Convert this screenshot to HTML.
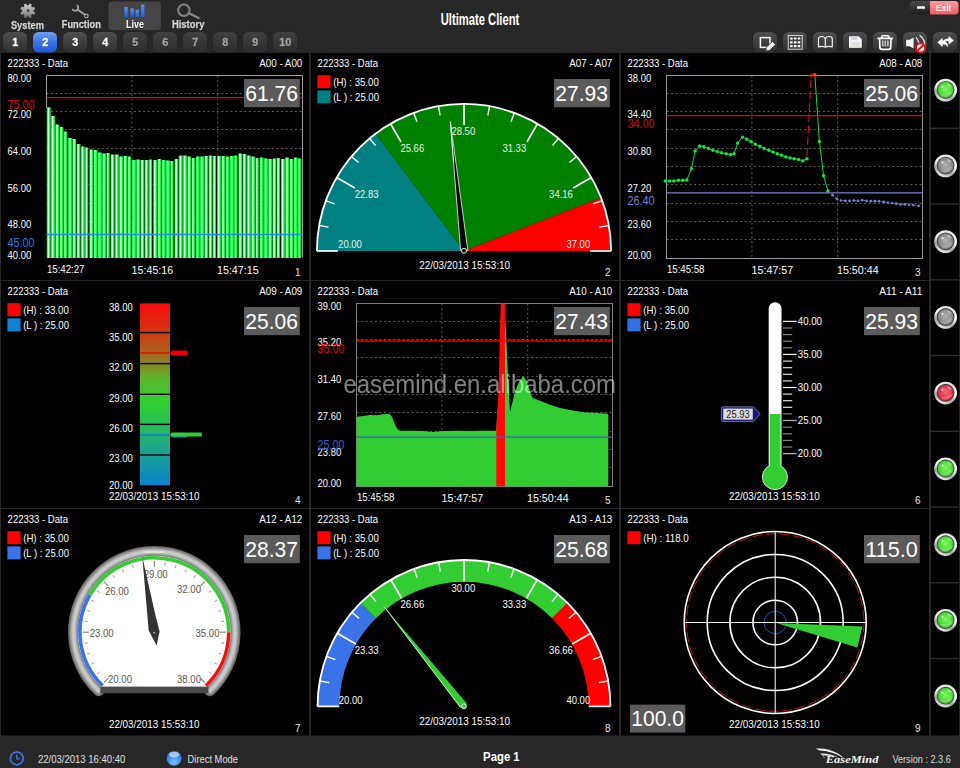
<!DOCTYPE html>
<html lang="en">
<head>
<meta charset="utf-8">
<title>Ultimate Client</title>
<style>
html, body { margin: 0; padding: 0; background: #272727; overflow: hidden; }
body { width: 960px; height: 768px; font-family: 'Liberation Sans', 'DejaVu Sans', sans-serif; }
svg { display: block; position: absolute; left: 0; top: 0; }
svg text { font-family: "Liberation Sans", "DejaVu Sans", sans-serif; }
</style>
</head>
<body>
<svg width="960" height="768" viewBox="0 0 960 768">
<defs>
<linearGradient id="gb" x1="0" y1="0" x2="0" y2="1"><stop offset="0" stop-color="#4e4e4e"/><stop offset="1" stop-color="#2f2f2f"/></linearGradient>
<linearGradient id="gbd" x1="0" y1="0" x2="0" y2="1"><stop offset="0" stop-color="#404040"/><stop offset="1" stop-color="#2c2c2c"/></linearGradient>
<linearGradient id="gba" x1="0" y1="0" x2="0" y2="1"><stop offset="0" stop-color="#6f9ff0"/><stop offset="0.5" stop-color="#3a74e4"/><stop offset="1" stop-color="#1c58d6"/></linearGradient>
<linearGradient id="gex" x1="0" y1="0" x2="0" y2="1"><stop offset="0" stop-color="#fb9a9e"/><stop offset="1" stop-color="#ee5d66"/></linearGradient>
<linearGradient id="gmin" x1="0" y1="0" x2="0" y2="1"><stop offset="0" stop-color="#4a4a4a"/><stop offset="1" stop-color="#1e1e1e"/></linearGradient>
<linearGradient id="gbar" x1="0" y1="0" x2="1" y2="0"><stop offset="0" stop-color="#04b024"/><stop offset="0.16" stop-color="#1cff50"/><stop offset="0.36" stop-color="#e4ffe8"/><stop offset="0.5" stop-color="#b0ffbc"/><stop offset="0.66" stop-color="#10ff44"/><stop offset="0.86" stop-color="#00e030"/><stop offset="1" stop-color="#003a0c"/></linearGradient>
<linearGradient id="ggear" gradientUnits="userSpaceOnUse" x1="0" y1="3" x2="0" y2="19"><stop offset="0" stop-color="#cdcdcd"/><stop offset="0.6" stop-color="#9a9a9a"/><stop offset="1" stop-color="#5e5e5e"/></linearGradient>
<linearGradient id="glive" x1="0" y1="0" x2="0" y2="1"><stop offset="0" stop-color="#5b93f5"/><stop offset="1" stop-color="#1f5be0"/></linearGradient>
<linearGradient id="gcol" x1="0" y1="0" x2="0" y2="1"><stop offset="0" stop-color="#f40c0c"/><stop offset="0.12" stop-color="#dc2c12"/><stop offset="0.27" stop-color="#a8641c"/><stop offset="0.42" stop-color="#58b82c"/><stop offset="0.55" stop-color="#30d032"/><stop offset="0.67" stop-color="#28bc58"/><stop offset="0.8" stop-color="#1ea48c"/><stop offset="1" stop-color="#0884cc"/></linearGradient>
<linearGradient id="gbez" x1="0" y1="0" x2="0" y2="1"><stop offset="0" stop-color="#8a8a8a"/><stop offset="1" stop-color="#6a6a6a"/></linearGradient>
<radialGradient id="ledg" cx="0.5" cy="0.45" r="0.6"><stop offset="0" stop-color="#86f766"/><stop offset="0.6" stop-color="#4fdc38"/><stop offset="1" stop-color="#28a81c"/></radialGradient>
<radialGradient id="ledr" cx="0.5" cy="0.45" r="0.6"><stop offset="0" stop-color="#f76a7c"/><stop offset="0.6" stop-color="#e0384e"/><stop offset="1" stop-color="#a01c30"/></radialGradient>
<radialGradient id="ledk" cx="0.5" cy="0.45" r="0.6"><stop offset="0" stop-color="#b4b4b4"/><stop offset="0.6" stop-color="#8e8e8e"/><stop offset="1" stop-color="#606060"/></radialGradient>
<linearGradient id="ring" x1="0.7" y1="0" x2="0.3" y2="1"><stop offset="0" stop-color="#e0e0e0"/><stop offset="0.4" stop-color="#ffffff"/><stop offset="0.72" stop-color="#a4a4a4"/><stop offset="1" stop-color="#f2f2f2"/></linearGradient>
<radialGradient id="globe" cx="0.5" cy="0.75" r="0.8"><stop offset="0" stop-color="#7cc0ff"/><stop offset="0.5" stop-color="#3f8fee"/><stop offset="1" stop-color="#2a6fd8"/></radialGradient>
<filter id="soft" x="-10%" y="-10%" width="120%" height="120%"><feGaussianBlur stdDeviation="1.1"/></filter>
</defs>
<rect x="0" y="0" width="960" height="768" fill="#272727"/>
<rect x="108.5" y="1.5" width="52.5" height="28.5" rx="4" fill="#454545"/>
<polygon points="33.05,10.11 35.22,9.16 34.21,6.72 32.00,7.57 31.03,6.60 31.88,4.39 29.44,3.38 28.49,5.55 27.11,5.55 26.16,3.38 23.72,4.39 24.57,6.60 23.60,7.57 21.39,6.72 20.38,9.16 22.55,10.11 22.55,11.49 20.38,12.44 21.39,14.88 23.60,14.03 24.57,15.00 23.72,17.21 26.16,18.22 27.11,16.05 28.49,16.05 29.44,18.22 31.88,17.21 31.03,15.00 32.00,14.03 34.21,14.88 35.22,12.44 33.05,11.49" fill="url(#ggear)"/>
<circle cx="27.8" cy="10.8" r="5.6" fill="url(#ggear)"/><circle cx="28.1" cy="10.4" r="1.25" fill="#333"/>
<g opacity="0.995">
<text x="27.4" y="29.4" font-size="10.8" fill="#111" text-anchor="middle" font-weight="bold" textLength="33" lengthAdjust="spacingAndGlyphs">System</text>
<text x="27.4" y="28.6" font-size="10.8" fill="#d8d8d8" text-anchor="middle" font-weight="bold" textLength="33" lengthAdjust="spacingAndGlyphs" stroke="#d8d8d8" stroke-width="0.25">System</text>
<g stroke="#a6a6a6" fill="none"><path d="M77.2,9.4 L85.2,14.8" stroke-width="1.8"/><circle cx="86.3" cy="15.9" r="1.8" stroke-width="1.25"/><path d="M73.2,9.2 A2.9,2.9 0 0 0 78.4,6 " stroke-width="0" fill="none"/><path d="M72.6,9.6 Q74.6,11.4 77,10.2 Q79.2,8.6 77.4,5.4" stroke-width="1.7" stroke-linecap="round"/></g>
<text x="81.3" y="28.8" font-size="10.8" fill="#111" text-anchor="middle" font-weight="bold" textLength="39" lengthAdjust="spacingAndGlyphs">Function</text>
<text x="81.3" y="28.0" font-size="10.8" fill="#d8d8d8" text-anchor="middle" font-weight="bold" textLength="39" lengthAdjust="spacingAndGlyphs" stroke="#d8d8d8" stroke-width="0.25">Function</text>
<rect x="124.4" y="7" width="3.3" height="10.2" rx="0.6" fill="url(#glive)"/>
<rect x="130.5" y="8.2" width="3.3" height="9.0" rx="0.6" fill="url(#glive)"/>
<rect x="135.6" y="9.8" width="3.3" height="7.4" rx="0.6" fill="url(#glive)"/>
<rect x="141.1" y="4.5" width="3.3" height="12.7" rx="0.6" fill="url(#glive)"/>
<text x="135.0" y="28.6" font-size="10.8" fill="#222" text-anchor="middle" font-weight="bold" textLength="18" lengthAdjust="spacingAndGlyphs">Live</text>
<text x="135.0" y="27.8" font-size="10.8" fill="#ffffff" text-anchor="middle" font-weight="bold" textLength="18" lengthAdjust="spacingAndGlyphs">Live</text>
<g stroke="#868686" fill="none" stroke-linecap="round"><circle cx="183.9" cy="10.2" r="5.7" stroke-width="2"/><path d="M189,13.2 L198.6,18" stroke-width="2.3"/></g>
<text x="188.2" y="28.6" font-size="10.8" fill="#111" text-anchor="middle" font-weight="bold" textLength="32.5" lengthAdjust="spacingAndGlyphs">History</text>
<text x="188.2" y="27.8" font-size="10.8" fill="#d8d8d8" text-anchor="middle" font-weight="bold" textLength="32.5" lengthAdjust="spacingAndGlyphs" stroke="#d8d8d8" stroke-width="0.25">History</text>
</g>
<text x="480.0" y="24.6" font-size="17.4" fill="#ffffff" text-anchor="middle" font-weight="bold" textLength="78.6" lengthAdjust="spacingAndGlyphs">Ultimate Client</text>
<rect x="2.5" y="31.5" width="25" height="21.8" rx="6" fill="#1f1f1f" opacity="0.7"/>
<rect x="3" y="32" width="24" height="20.4" rx="5.5" fill="url(#gb)"/>
<g opacity="0.995">
<text x="15.3" y="46.9" font-size="10.8" fill="#1a1a1a" text-anchor="middle" font-weight="bold">1</text>
<text x="15.3" y="46.1" font-size="10.8" fill="#ffffff" text-anchor="middle" font-weight="bold" stroke="#ffffff" stroke-width="0.3">1</text>
</g>
<rect x="32.5" y="31.5" width="25" height="21.8" rx="6" fill="#1f1f1f" opacity="0.7"/>
<rect x="33" y="32" width="24" height="20.4" rx="5.5" fill="url(#gba)"/>
<g opacity="0.995">
<text x="45.3" y="46.9" font-size="10.8" fill="#1c4ab0" text-anchor="middle" font-weight="bold">2</text>
<text x="45.3" y="46.1" font-size="10.8" fill="#ffffff" text-anchor="middle" font-weight="bold" stroke="#ffffff" stroke-width="0.3">2</text>
</g>
<rect x="62.5" y="31.5" width="25" height="21.8" rx="6" fill="#1f1f1f" opacity="0.7"/>
<rect x="63" y="32" width="24" height="20.4" rx="5.5" fill="url(#gb)"/>
<g opacity="0.995">
<text x="75.3" y="46.9" font-size="10.8" fill="#1a1a1a" text-anchor="middle" font-weight="bold">3</text>
<text x="75.3" y="46.1" font-size="10.8" fill="#ffffff" text-anchor="middle" font-weight="bold" stroke="#ffffff" stroke-width="0.3">3</text>
</g>
<rect x="92.5" y="31.5" width="25" height="21.8" rx="6" fill="#1f1f1f" opacity="0.7"/>
<rect x="93" y="32" width="24" height="20.4" rx="5.5" fill="url(#gb)"/>
<g opacity="0.995">
<text x="105.3" y="46.9" font-size="10.8" fill="#1a1a1a" text-anchor="middle" font-weight="bold">4</text>
<text x="105.3" y="46.1" font-size="10.8" fill="#ffffff" text-anchor="middle" font-weight="bold" stroke="#ffffff" stroke-width="0.3">4</text>
</g>
<rect x="122.5" y="31.5" width="25" height="21.8" rx="6" fill="#1f1f1f" opacity="0.7"/>
<rect x="123" y="32" width="24" height="20.4" rx="5.5" fill="url(#gbd)"/>
<g opacity="0.995">
<text x="135.3" y="46.9" font-size="10.8" fill="#1a1a1a" text-anchor="middle" font-weight="bold">5</text>
<text x="135.3" y="46.1" font-size="10.8" fill="#a4a4a4" text-anchor="middle" font-weight="bold" stroke="#a4a4a4" stroke-width="0.3">5</text>
</g>
<rect x="152.5" y="31.5" width="25" height="21.8" rx="6" fill="#1f1f1f" opacity="0.7"/>
<rect x="153" y="32" width="24" height="20.4" rx="5.5" fill="url(#gbd)"/>
<g opacity="0.995">
<text x="165.3" y="46.9" font-size="10.8" fill="#1a1a1a" text-anchor="middle" font-weight="bold">6</text>
<text x="165.3" y="46.1" font-size="10.8" fill="#a4a4a4" text-anchor="middle" font-weight="bold" stroke="#a4a4a4" stroke-width="0.3">6</text>
</g>
<rect x="182.5" y="31.5" width="25" height="21.8" rx="6" fill="#1f1f1f" opacity="0.7"/>
<rect x="183" y="32" width="24" height="20.4" rx="5.5" fill="url(#gbd)"/>
<g opacity="0.995">
<text x="195.3" y="46.9" font-size="10.8" fill="#1a1a1a" text-anchor="middle" font-weight="bold">7</text>
<text x="195.3" y="46.1" font-size="10.8" fill="#a4a4a4" text-anchor="middle" font-weight="bold" stroke="#a4a4a4" stroke-width="0.3">7</text>
</g>
<rect x="212.5" y="31.5" width="25" height="21.8" rx="6" fill="#1f1f1f" opacity="0.7"/>
<rect x="213" y="32" width="24" height="20.4" rx="5.5" fill="url(#gbd)"/>
<g opacity="0.995">
<text x="225.3" y="46.9" font-size="10.8" fill="#1a1a1a" text-anchor="middle" font-weight="bold">8</text>
<text x="225.3" y="46.1" font-size="10.8" fill="#a4a4a4" text-anchor="middle" font-weight="bold" stroke="#a4a4a4" stroke-width="0.3">8</text>
</g>
<rect x="242.5" y="31.5" width="25" height="21.8" rx="6" fill="#1f1f1f" opacity="0.7"/>
<rect x="243" y="32" width="24" height="20.4" rx="5.5" fill="url(#gbd)"/>
<g opacity="0.995">
<text x="255.3" y="46.9" font-size="10.8" fill="#1a1a1a" text-anchor="middle" font-weight="bold">9</text>
<text x="255.3" y="46.1" font-size="10.8" fill="#a4a4a4" text-anchor="middle" font-weight="bold" stroke="#a4a4a4" stroke-width="0.3">9</text>
</g>
<rect x="272.5" y="31.5" width="25" height="21.8" rx="6" fill="#1f1f1f" opacity="0.7"/>
<rect x="273" y="32" width="24" height="20.4" rx="5.5" fill="url(#gbd)"/>
<g opacity="0.995">
<text x="285.3" y="46.9" font-size="10.8" fill="#1a1a1a" text-anchor="middle" font-weight="bold">10</text>
<text x="285.3" y="46.1" font-size="10.8" fill="#a4a4a4" text-anchor="middle" font-weight="bold" stroke="#a4a4a4" stroke-width="0.3">10</text>
</g>
<path d="M913,1 H930 V14 H913 Q909.5,14 909.5,10.5 V4.5 Q909.5,1 913,1 Z" fill="url(#gmin)"/>
<path d="M930,1 H955 Q958.5,1 958.5,4.5 V11 Q958.5,14.5 955,14.5 H930 Z" fill="url(#gex)"/>
<rect x="917" y="6.2" width="8" height="2.6" rx="0.6" fill="#ffffff"/>
<text x="943.6" y="11.2" font-size="9.4" fill="#fff1f1" text-anchor="middle" font-weight="bold" textLength="15.5" lengthAdjust="spacingAndGlyphs">Exit</text>
<rect x="752.5" y="31.5" width="25" height="21.8" rx="6" fill="#1f1f1f" opacity="0.7"/>
<rect x="753" y="32" width="24" height="20.4" rx="5.5" fill="url(#gb)"/>
<rect x="782.5" y="31.5" width="25" height="21.8" rx="6" fill="#1f1f1f" opacity="0.7"/>
<rect x="783" y="32" width="24" height="20.4" rx="5.5" fill="url(#gb)"/>
<rect x="812.5" y="31.5" width="25" height="21.8" rx="6" fill="#1f1f1f" opacity="0.7"/>
<rect x="813" y="32" width="24" height="20.4" rx="5.5" fill="url(#gb)"/>
<rect x="842.5" y="31.5" width="25" height="21.8" rx="6" fill="#1f1f1f" opacity="0.7"/>
<rect x="843" y="32" width="24" height="20.4" rx="5.5" fill="url(#gb)"/>
<rect x="872.5" y="31.5" width="25" height="21.8" rx="6" fill="#1f1f1f" opacity="0.7"/>
<rect x="873" y="32" width="24" height="20.4" rx="5.5" fill="url(#gb)"/>
<rect x="902.5" y="31.5" width="25" height="21.8" rx="6" fill="#1f1f1f" opacity="0.7"/>
<rect x="903" y="32" width="24" height="20.4" rx="5.5" fill="url(#gb)"/>
<rect x="932.5" y="31.5" width="25" height="21.8" rx="6" fill="#1f1f1f" opacity="0.7"/>
<rect x="933" y="32" width="24" height="20.4" rx="5.5" fill="url(#gb)"/>
<g><rect x="760.4" y="37.6" width="9.6" height="9.8" fill="none" stroke="#fff" stroke-width="1.5"/><path d="M765.2,51.5 L766.4,47.2 L772.4,41.4 L775.6,44.6 L769.6,50.4 Z" fill="#ececec" stroke="#2c2c2c" stroke-width="0.8"/><path d="M765.2,51.5 L766,48.8 L767.9,50.7 Z" fill="#666"/></g>
<rect x="788.2" y="35.4" width="14" height="13.8" fill="none" stroke="#e8e8e8" stroke-width="0.9"/>
<rect x="790.1" y="37.4" width="2.6" height="2.2" rx="0.5" fill="#fff"/>
<rect x="793.9" y="37.4" width="2.6" height="2.2" rx="0.5" fill="#fff"/>
<rect x="797.7" y="37.4" width="2.6" height="2.2" rx="0.5" fill="#fff"/>
<rect x="790.1" y="41.2" width="2.6" height="2.2" rx="0.5" fill="#fff"/>
<rect x="793.9" y="41.2" width="2.6" height="2.2" rx="0.5" fill="#fff"/>
<rect x="797.7" y="41.2" width="2.6" height="2.2" rx="0.5" fill="#fff"/>
<rect x="790.1" y="45.0" width="2.6" height="2.2" rx="0.5" fill="#fff"/>
<rect x="793.9" y="45.0" width="2.6" height="2.2" rx="0.5" fill="#fff"/>
<rect x="797.7" y="45.0" width="2.6" height="2.2" rx="0.5" fill="#fff"/>
<path d="M818.5,47 V39 Q818.5,36.5 821.5,36.5 Q825,36.5 825.3,39.5 Q825.6,36.5 829,36.5 Q832.3,36.5 832.3,39 V47 Q828.5,45.8 825.3,47.2 Q822,45.8 818.5,47 Z M825.3,39.5 V47" fill="none" stroke="#f2f2f2" stroke-width="1.2" stroke-linejoin="round"/>
<path d="M849,36.3 H858.5 L861.8,39.3 V47.8 H849 Z" fill="#f4f4f4"/><rect x="851.2" y="36.3" width="6" height="3.6" fill="#c9d3e6"/><rect x="851" y="42.3" width="8.8" height="5.5" fill="#e2e2e2"/>
<g fill="none" stroke="#fff" stroke-linejoin="round" stroke-linecap="round"><path d="M878.2,38.4 H892.4" stroke-width="1.7"/><path d="M879.6,39 L879.9,47.4 Q880,49.3 881.9,49.3 H888.7 Q890.6,49.3 890.7,47.4 L891,39" stroke-width="1.7"/><path d="M881.6,38 V36.8 Q881.6,35.8 882.8,35.8 H887.8 Q889,35.8 889,36.8 V38" stroke-width="1.4"/></g><path d="M882.7,40.4 V46.4 M885.3,40.4 V46.4 M887.9,40.4 V46.4" stroke="#c4c4c4" stroke-width="1.7" fill="none"/>
<path d="M906.1,39.8 H909.6 L913.6,37.6 V48.4 L909.6,46.2 H906.1 Z" fill="#f4f4f4"/><path d="M916,37.4 Q919.6,41.6 918.6,46.4" fill="none" stroke="#ececec" stroke-width="1.2"/><path d="M919.6,35.2 Q925.4,39.6 924.6,45.6" fill="none" stroke="#ececec" stroke-width="1.3"/>
<circle cx="920.6" cy="47.8" r="4.6" fill="#fff" stroke="#f00814" stroke-width="1.9"/><path d="M917.4,50.8 L923.8,44.8" stroke="#f00814" stroke-width="1.9"/>
<path d="M937.4,42.4 L942.6,37.8 V40.6 Q947.6,40.4 948.2,47.4 Q946,43.8 942.6,44.2 V47 Z" fill="#fff"/><path d="M953.8,40.4 L948.6,36 V38.6 Q944.2,38.6 943.2,41.6 Q945.6,40.8 948.6,41.2 V44.8 Z" fill="#fff"/>
<rect x="1" y="53" width="308" height="227" fill="#000"/>
<rect x="311" y="53" width="308" height="227" fill="#000"/>
<rect x="621" y="53" width="308" height="227" fill="#000"/>
<rect x="1" y="281" width="308" height="227" fill="#000"/>
<rect x="311" y="281" width="308" height="227" fill="#000"/>
<rect x="621" y="281" width="308" height="227" fill="#000"/>
<rect x="1" y="509" width="308" height="226.5" fill="#000"/>
<rect x="311" y="509" width="308" height="226.5" fill="#000"/>
<rect x="621" y="509" width="308" height="226.5" fill="#000"/>
<rect x="931" y="53" width="28" height="682.5" fill="#000"/>
<rect x="931" y="127.64" width="28" height="1.4" fill="#2f2f2f"/>
<rect x="931" y="203.38" width="28" height="1.4" fill="#2f2f2f"/>
<rect x="931" y="279.12" width="28" height="1.4" fill="#2f2f2f"/>
<rect x="931" y="354.86" width="28" height="1.4" fill="#2f2f2f"/>
<rect x="931" y="430.60" width="28" height="1.4" fill="#2f2f2f"/>
<rect x="931" y="506.34" width="28" height="1.4" fill="#2f2f2f"/>
<rect x="931" y="582.08" width="28" height="1.4" fill="#2f2f2f"/>
<rect x="931" y="657.82" width="28" height="1.4" fill="#2f2f2f"/>
<circle cx="945.6" cy="90.1" r="11.4" fill="url(#ring)"/>
<circle cx="945.6" cy="89.8" r="8.9" fill="#3a3a3a"/>
<circle cx="945.6" cy="89.89999999999999" r="8.1" fill="url(#ledg)"/>
<path d="M940.0,93.3 Q946.1,95.69999999999999 949.2,91.5 Q951.2,89.69999999999999 952.6,92.3 Q948.6,98.3 942.2,96.5 Z" fill="#fff" opacity="0.22"/>
<circle cx="942.5" cy="86.69999999999999" r="1.1" fill="#fff" opacity="0.75"/>
<ellipse cx="949.4" cy="85.1" rx="2.4" ry="1.1" fill="#fff" opacity="0.35" transform="rotate(35 949.4 85.1)"/>
<circle cx="945.6" cy="165.84" r="11.4" fill="url(#ring)"/>
<circle cx="945.6" cy="165.54" r="8.9" fill="#3a3a3a"/>
<circle cx="945.6" cy="165.64000000000001" r="8.1" fill="url(#ledk)"/>
<path d="M940.0,169.04 Q946.1,171.44 949.2,167.24 Q951.2,165.44 952.6,168.04 Q948.6,174.04 942.2,172.24 Z" fill="#fff" opacity="0.22"/>
<circle cx="942.5" cy="162.44" r="1.1" fill="#fff" opacity="0.75"/>
<ellipse cx="949.4" cy="160.84" rx="2.4" ry="1.1" fill="#fff" opacity="0.35" transform="rotate(35 949.4 160.84)"/>
<circle cx="945.6" cy="241.58" r="11.4" fill="url(#ring)"/>
<circle cx="945.6" cy="241.28" r="8.9" fill="#3a3a3a"/>
<circle cx="945.6" cy="241.38000000000002" r="8.1" fill="url(#ledk)"/>
<path d="M940.0,244.78 Q946.1,247.18 949.2,242.98000000000002 Q951.2,241.18 952.6,243.78 Q948.6,249.78 942.2,247.98000000000002 Z" fill="#fff" opacity="0.22"/>
<circle cx="942.5" cy="238.18" r="1.1" fill="#fff" opacity="0.75"/>
<ellipse cx="949.4" cy="236.58" rx="2.4" ry="1.1" fill="#fff" opacity="0.35" transform="rotate(35 949.4 236.58)"/>
<circle cx="945.6" cy="317.32" r="11.4" fill="url(#ring)"/>
<circle cx="945.6" cy="317.02" r="8.9" fill="#3a3a3a"/>
<circle cx="945.6" cy="317.12" r="8.1" fill="url(#ledk)"/>
<path d="M940.0,320.52 Q946.1,322.92 949.2,318.71999999999997 Q951.2,316.92 952.6,319.52 Q948.6,325.52 942.2,323.71999999999997 Z" fill="#fff" opacity="0.22"/>
<circle cx="942.5" cy="313.92" r="1.1" fill="#fff" opacity="0.75"/>
<ellipse cx="949.4" cy="312.32" rx="2.4" ry="1.1" fill="#fff" opacity="0.35" transform="rotate(35 949.4 312.32)"/>
<circle cx="945.6" cy="393.06" r="11.4" fill="url(#ring)"/>
<circle cx="945.6" cy="392.76" r="8.9" fill="#3a3a3a"/>
<circle cx="945.6" cy="392.86" r="8.1" fill="url(#ledr)"/>
<path d="M940.0,396.26 Q946.1,398.66 949.2,394.46 Q951.2,392.66 952.6,395.26 Q948.6,401.26 942.2,399.46 Z" fill="#fff" opacity="0.22"/>
<circle cx="942.5" cy="389.66" r="1.1" fill="#fff" opacity="0.75"/>
<ellipse cx="949.4" cy="388.06" rx="2.4" ry="1.1" fill="#fff" opacity="0.35" transform="rotate(35 949.4 388.06)"/>
<circle cx="945.6" cy="468.8" r="11.4" fill="url(#ring)"/>
<circle cx="945.6" cy="468.5" r="8.9" fill="#3a3a3a"/>
<circle cx="945.6" cy="468.6" r="8.1" fill="url(#ledg)"/>
<path d="M940.0,472.0 Q946.1,474.40000000000003 949.2,470.2 Q951.2,468.40000000000003 952.6,471.0 Q948.6,477.0 942.2,475.2 Z" fill="#fff" opacity="0.22"/>
<circle cx="942.5" cy="465.40000000000003" r="1.1" fill="#fff" opacity="0.75"/>
<ellipse cx="949.4" cy="463.8" rx="2.4" ry="1.1" fill="#fff" opacity="0.35" transform="rotate(35 949.4 463.8)"/>
<circle cx="945.6" cy="544.54" r="11.4" fill="url(#ring)"/>
<circle cx="945.6" cy="544.24" r="8.9" fill="#3a3a3a"/>
<circle cx="945.6" cy="544.3399999999999" r="8.1" fill="url(#ledg)"/>
<path d="M940.0,547.74 Q946.1,550.14 949.2,545.9399999999999 Q951.2,544.14 952.6,546.74 Q948.6,552.74 942.2,550.9399999999999 Z" fill="#fff" opacity="0.22"/>
<circle cx="942.5" cy="541.14" r="1.1" fill="#fff" opacity="0.75"/>
<ellipse cx="949.4" cy="539.54" rx="2.4" ry="1.1" fill="#fff" opacity="0.35" transform="rotate(35 949.4 539.54)"/>
<circle cx="945.6" cy="620.28" r="11.4" fill="url(#ring)"/>
<circle cx="945.6" cy="619.98" r="8.9" fill="#3a3a3a"/>
<circle cx="945.6" cy="620.0799999999999" r="8.1" fill="url(#ledg)"/>
<path d="M940.0,623.48 Q946.1,625.88 949.2,621.68 Q951.2,619.88 952.6,622.48 Q948.6,628.48 942.2,626.68 Z" fill="#fff" opacity="0.22"/>
<circle cx="942.5" cy="616.88" r="1.1" fill="#fff" opacity="0.75"/>
<ellipse cx="949.4" cy="615.28" rx="2.4" ry="1.1" fill="#fff" opacity="0.35" transform="rotate(35 949.4 615.28)"/>
<circle cx="945.6" cy="696.02" r="11.4" fill="url(#ring)"/>
<circle cx="945.6" cy="695.72" r="8.9" fill="#3a3a3a"/>
<circle cx="945.6" cy="695.8199999999999" r="8.1" fill="url(#ledg)"/>
<path d="M940.0,699.22 Q946.1,701.62 949.2,697.42 Q951.2,695.62 952.6,698.22 Q948.6,704.22 942.2,702.42 Z" fill="#fff" opacity="0.22"/>
<circle cx="942.5" cy="692.62" r="1.1" fill="#fff" opacity="0.75"/>
<ellipse cx="949.4" cy="691.02" rx="2.4" ry="1.1" fill="#fff" opacity="0.35" transform="rotate(35 949.4 691.02)"/>
<text x="7.6" y="67.0" font-size="10.77" fill="#fff" textLength="60.4" lengthAdjust="spacingAndGlyphs">222333 - Data</text>
<text x="302.3" y="67.0" font-size="10.77" fill="#fff" text-anchor="end" textLength="43" lengthAdjust="spacingAndGlyphs">A00 - A00</text>
<text x="300.6" y="276.2" font-size="9.99" fill="#e6e6e6" text-anchor="end">1</text>
<path d="M46.5,93.5 H302.5" stroke="#5c5c5c" stroke-width="1" stroke-dasharray="2,2.6"/>
<path d="M46.5,111.5 H302.5" stroke="#5c5c5c" stroke-width="1" stroke-dasharray="2,2.6"/>
<path d="M46.5,129.5 H302.5" stroke="#5c5c5c" stroke-width="1" stroke-dasharray="2,2.6"/>
<path d="M46.5,148.5 H302.5" stroke="#5c5c5c" stroke-width="1" stroke-dasharray="2,2.6"/>
<path d="M46.5,166.5 H302.5" stroke="#5c5c5c" stroke-width="1" stroke-dasharray="2,2.6"/>
<path d="M46.5,184.5 H302.5" stroke="#5c5c5c" stroke-width="1" stroke-dasharray="2,2.6"/>
<path d="M46.5,203.5 H302.5" stroke="#5c5c5c" stroke-width="1" stroke-dasharray="2,2.6"/>
<path d="M46.5,221.5 H302.5" stroke="#5c5c5c" stroke-width="1" stroke-dasharray="2,2.6"/>
<path d="M46.5,239.5 H302.5" stroke="#5c5c5c" stroke-width="1" stroke-dasharray="2,2.6"/>
<path d="M131.9,75.5 V258.5" stroke="#5c5c5c" stroke-width="1" stroke-dasharray="2,2.6"/>
<path d="M217.7,75.5 V258.5" stroke="#5c5c5c" stroke-width="1" stroke-dasharray="2,2.6"/>
<path d="M46.5,108 V75.5 H302.5 V257.5" fill="none" stroke="#a0a0a0" stroke-width="1"/>
<rect x="46.70" y="107.3" width="4.26" height="150.7" fill="url(#gbar)"/>
<rect x="50.96" y="116.0" width="4.26" height="142.0" fill="url(#gbar)"/>
<rect x="55.22" y="124.5" width="4.26" height="133.5" fill="url(#gbar)"/>
<rect x="59.48" y="127.0" width="4.26" height="131.0" fill="url(#gbar)"/>
<rect x="63.73" y="131.5" width="3.56" height="126.5" fill="url(#gbar)"/>
<rect x="67.99" y="138.0" width="4.26" height="120.0" fill="url(#gbar)"/>
<rect x="72.25" y="139.0" width="4.26" height="119.0" fill="url(#gbar)"/>
<rect x="76.51" y="144.0" width="4.26" height="114.0" fill="url(#gbar)"/>
<rect x="80.77" y="146.5" width="4.26" height="111.5" fill="url(#gbar)"/>
<rect x="85.03" y="147.5" width="3.56" height="110.5" fill="url(#gbar)"/>
<rect x="89.28" y="149.5" width="4.26" height="108.5" fill="url(#gbar)"/>
<rect x="93.54" y="150.0" width="4.26" height="108.0" fill="url(#gbar)"/>
<rect x="97.80" y="152.5" width="4.26" height="105.5" fill="url(#gbar)"/>
<rect x="102.06" y="153.5" width="4.26" height="104.5" fill="url(#gbar)"/>
<rect x="106.32" y="153.0" width="3.56" height="105.0" fill="url(#gbar)"/>
<rect x="110.58" y="154.5" width="4.26" height="103.5" fill="url(#gbar)"/>
<rect x="114.83" y="154.5" width="4.26" height="103.5" fill="url(#gbar)"/>
<rect x="119.09" y="156.5" width="4.26" height="101.5" fill="url(#gbar)"/>
<rect x="123.35" y="156.0" width="4.26" height="102.0" fill="url(#gbar)"/>
<rect x="127.61" y="156.5" width="3.56" height="101.5" fill="url(#gbar)"/>
<rect x="131.87" y="160.0" width="4.26" height="98.0" fill="url(#gbar)"/>
<rect x="136.12" y="159.5" width="4.26" height="98.5" fill="url(#gbar)"/>
<rect x="140.38" y="160.0" width="4.26" height="98.0" fill="url(#gbar)"/>
<rect x="144.64" y="160.0" width="4.26" height="98.0" fill="url(#gbar)"/>
<rect x="148.90" y="159.5" width="3.56" height="98.5" fill="url(#gbar)"/>
<rect x="153.16" y="160.0" width="4.26" height="98.0" fill="url(#gbar)"/>
<rect x="157.42" y="159.0" width="4.26" height="99.0" fill="url(#gbar)"/>
<rect x="161.68" y="160.0" width="4.26" height="98.0" fill="url(#gbar)"/>
<rect x="165.93" y="160.5" width="4.26" height="97.5" fill="url(#gbar)"/>
<rect x="170.19" y="161.0" width="3.56" height="97.0" fill="url(#gbar)"/>
<rect x="174.45" y="159.0" width="4.26" height="99.0" fill="url(#gbar)"/>
<rect x="178.71" y="155.5" width="4.26" height="102.5" fill="url(#gbar)"/>
<rect x="182.97" y="155.5" width="4.26" height="102.5" fill="url(#gbar)"/>
<rect x="187.22" y="156.5" width="4.26" height="101.5" fill="url(#gbar)"/>
<rect x="191.48" y="158.0" width="3.56" height="100.0" fill="url(#gbar)"/>
<rect x="195.74" y="156.5" width="4.26" height="101.5" fill="url(#gbar)"/>
<rect x="200.00" y="156.5" width="4.26" height="101.5" fill="url(#gbar)"/>
<rect x="204.26" y="156.0" width="4.26" height="102.0" fill="url(#gbar)"/>
<rect x="208.52" y="155.5" width="4.26" height="102.5" fill="url(#gbar)"/>
<rect x="212.78" y="156.0" width="3.56" height="102.0" fill="url(#gbar)"/>
<rect x="217.03" y="156.0" width="4.26" height="102.0" fill="url(#gbar)"/>
<rect x="221.29" y="156.0" width="4.26" height="102.0" fill="url(#gbar)"/>
<rect x="225.55" y="156.5" width="4.26" height="101.5" fill="url(#gbar)"/>
<rect x="229.81" y="156.0" width="4.26" height="102.0" fill="url(#gbar)"/>
<rect x="234.07" y="155.5" width="3.56" height="102.5" fill="url(#gbar)"/>
<rect x="238.33" y="153.5" width="4.26" height="104.5" fill="url(#gbar)"/>
<rect x="242.58" y="154.0" width="4.26" height="104.0" fill="url(#gbar)"/>
<rect x="246.84" y="155.5" width="4.26" height="102.5" fill="url(#gbar)"/>
<rect x="251.10" y="156.5" width="4.26" height="101.5" fill="url(#gbar)"/>
<rect x="255.36" y="158.0" width="3.56" height="100.0" fill="url(#gbar)"/>
<rect x="259.62" y="157.5" width="4.26" height="100.5" fill="url(#gbar)"/>
<rect x="263.88" y="158.5" width="4.26" height="99.5" fill="url(#gbar)"/>
<rect x="268.13" y="159.0" width="4.26" height="99.0" fill="url(#gbar)"/>
<rect x="272.39" y="158.5" width="4.26" height="99.5" fill="url(#gbar)"/>
<rect x="276.65" y="158.0" width="3.56" height="100.0" fill="url(#gbar)"/>
<rect x="280.91" y="159.0" width="4.26" height="99.0" fill="url(#gbar)"/>
<rect x="285.17" y="157.5" width="4.26" height="100.5" fill="url(#gbar)"/>
<rect x="289.43" y="159.0" width="4.26" height="99.0" fill="url(#gbar)"/>
<rect x="293.68" y="157.5" width="4.26" height="100.5" fill="url(#gbar)"/>
<rect x="297.94" y="158.5" width="3.56" height="99.5" fill="url(#gbar)"/>
<path d="M46.5,97.6 H302.5" stroke="#f00000" stroke-width="1.4"/>
<path d="M46.5,234.5 H302.5" stroke="#1e8ae6" stroke-width="1.3"/>
<text x="7.6" y="81.8" font-size="10.66" fill="#fff" textLength="23.6" lengthAdjust="spacingAndGlyphs">80.00</text>
<text x="7.6" y="118.4" font-size="10.66" fill="#fff" textLength="23.6" lengthAdjust="spacingAndGlyphs">72.00</text>
<text x="7.6" y="155.0" font-size="10.66" fill="#fff" textLength="23.6" lengthAdjust="spacingAndGlyphs">64.00</text>
<text x="7.6" y="191.6" font-size="10.66" fill="#fff" textLength="23.6" lengthAdjust="spacingAndGlyphs">56.00</text>
<text x="7.6" y="228.2" font-size="10.66" fill="#fff" textLength="23.6" lengthAdjust="spacingAndGlyphs">48.00</text>
<text x="7.6" y="259.4" font-size="10.66" fill="#fff" textLength="23.6" lengthAdjust="spacingAndGlyphs">40.00</text>
<text x="46.9" y="272.6" font-size="10.43" fill="#fff" textLength="37.6" lengthAdjust="spacingAndGlyphs">15:42:27</text>
<text x="131.6" y="273.7" font-size="11.32" fill="#fff" textLength="41.6" lengthAdjust="spacingAndGlyphs">15:45:16</text>
<text x="217.0" y="273.7" font-size="11.32" fill="#fff" textLength="41.6" lengthAdjust="spacingAndGlyphs">15:47:15</text>
<text x="7.6" y="109.2" font-size="11.99" fill="#e00000" textLength="27" lengthAdjust="spacingAndGlyphs">75.00</text>
<text x="7.6" y="246.6" font-size="11.99" fill="#1e7fe0" textLength="27" lengthAdjust="spacingAndGlyphs">45.00</text>
<rect x="244" y="79" width="55.8" height="28.2" fill="#5b5b5b"/>
<text x="271.6" y="100.7" font-size="21.2" fill="#fff" text-anchor="middle" textLength="52.6" lengthAdjust="spacingAndGlyphs">61.76</text>
<text x="317.6" y="67.0" font-size="10.77" fill="#fff" textLength="60.4" lengthAdjust="spacingAndGlyphs">222333 - Data</text>
<text x="612.3" y="67.0" font-size="10.77" fill="#fff" text-anchor="end" textLength="43" lengthAdjust="spacingAndGlyphs">A07 - A07</text>
<text x="610.6" y="276.2" font-size="9.99" fill="#e6e6e6" text-anchor="end">2</text>
<rect x="317.4" y="75.2" width="13.2" height="13" fill="#ff0000"/>
<text x="333.2" y="85.6" font-size="10.66" fill="#fff" textLength="45.6" lengthAdjust="spacingAndGlyphs">(H) : 35.00</text>
<rect x="317.4" y="90.4" width="13.2" height="13" fill="#008080"/>
<text x="333.2" y="100.8" font-size="10.66" fill="#fff" textLength="45.8" lengthAdjust="spacingAndGlyphs">(L ) : 25.00</text>
<path d="M464.00,251.00 L316.90,251.00 A147.1,147.1 0 0 1 375.35,133.61 Z" fill="#008080"/>
<path d="M464.00,251.00 L375.35,133.61 A147.1,147.1 0 0 1 601.17,197.86 Z" fill="#008000"/>
<path d="M464.00,251.00 L601.17,197.86 A147.1,147.1 0 0 1 611.10,251.00 Z" fill="#ff0000"/>
<path d="M316.90,251.00 A147.1,147.1 0 0 1 611.10,251.00" fill="none" stroke="#fff" stroke-width="1.8"/>
<path d="M316.90,251.00 L337.90,251.00" stroke="#fff" stroke-width="1.7"/>
<path d="M319.13,225.46 L328.49,227.11" stroke="#fff" stroke-width="1.4"/>
<path d="M325.77,200.69 L334.70,203.94" stroke="#fff" stroke-width="1.4"/>
<path d="M336.61,177.45 L354.79,187.95" stroke="#fff" stroke-width="1.7"/>
<path d="M351.31,156.45 L358.59,162.55" stroke="#fff" stroke-width="1.4"/>
<path d="M369.45,138.31 L375.55,145.59" stroke="#fff" stroke-width="1.4"/>
<path d="M390.45,123.61 L400.95,141.79" stroke="#fff" stroke-width="1.7"/>
<path d="M413.69,112.77 L416.94,121.70" stroke="#fff" stroke-width="1.4"/>
<path d="M438.46,106.13 L440.11,115.49" stroke="#fff" stroke-width="1.4"/>
<path d="M464.00,103.90 L464.00,124.90" stroke="#fff" stroke-width="1.7"/>
<path d="M489.54,106.13 L487.89,115.49" stroke="#fff" stroke-width="1.4"/>
<path d="M514.31,112.77 L511.06,121.70" stroke="#fff" stroke-width="1.4"/>
<path d="M537.55,123.61 L527.05,141.79" stroke="#fff" stroke-width="1.7"/>
<path d="M558.55,138.31 L552.45,145.59" stroke="#fff" stroke-width="1.4"/>
<path d="M576.69,156.45 L569.41,162.55" stroke="#fff" stroke-width="1.4"/>
<path d="M591.39,177.45 L573.21,187.95" stroke="#fff" stroke-width="1.7"/>
<path d="M602.23,200.69 L593.30,203.94" stroke="#fff" stroke-width="1.4"/>
<path d="M608.87,225.46 L599.51,227.11" stroke="#fff" stroke-width="1.4"/>
<path d="M611.10,251.00 L590.10,251.00" stroke="#fff" stroke-width="1.7"/>
<text x="350.0" y="247.8" font-size="10.66" fill="#e8f4e8" text-anchor="middle" textLength="23.8" lengthAdjust="spacingAndGlyphs">20.00</text>
<text x="366.7" y="197.5" font-size="10.66" fill="#e8f4e8" text-anchor="middle" textLength="23.8" lengthAdjust="spacingAndGlyphs">22.83</text>
<text x="412.3" y="151.8" font-size="10.66" fill="#e8f4e8" text-anchor="middle" textLength="23.8" lengthAdjust="spacingAndGlyphs">25.66</text>
<text x="463.3" y="135.2" font-size="10.66" fill="#e8f4e8" text-anchor="middle" textLength="23.8" lengthAdjust="spacingAndGlyphs">28.50</text>
<text x="514.3" y="151.8" font-size="10.66" fill="#e8f4e8" text-anchor="middle" textLength="23.8" lengthAdjust="spacingAndGlyphs">31.33</text>
<text x="561.0" y="197.8" font-size="10.66" fill="#e8f4e8" text-anchor="middle" textLength="23.8" lengthAdjust="spacingAndGlyphs">34.16</text>
<text x="578.3" y="247.8" font-size="10.66" fill="#e8f4e8" text-anchor="middle" textLength="23.8" lengthAdjust="spacingAndGlyphs">37.00</text>
<path d="M450.3,121.6 L460.6,250.6 L467.9,250.6 Z" fill="#050505" stroke="#f4f4f4" stroke-width="0.8" stroke-linejoin="round"/>
<path d="M450.5,122 L453.6,162" stroke="#fff" stroke-width="0.7" fill="none"/>
<circle cx="464" cy="250.8" r="2.5" fill="#111" stroke="#fff" stroke-width="0.9"/>
<text x="464.6" y="268.6" font-size="10.77" fill="#fff" text-anchor="middle" textLength="90.6" lengthAdjust="spacingAndGlyphs">22/03/2013 15:53:10</text>
<rect x="554" y="79" width="55.8" height="28.2" fill="#5b5b5b"/>
<text x="581.6" y="100.7" font-size="21.2" fill="#fff" text-anchor="middle" textLength="52.6" lengthAdjust="spacingAndGlyphs">27.93</text>
<text x="627.6" y="67.0" font-size="10.77" fill="#fff" textLength="60.4" lengthAdjust="spacingAndGlyphs">222333 - Data</text>
<text x="922.3" y="67.0" font-size="10.77" fill="#fff" text-anchor="end" textLength="43" lengthAdjust="spacingAndGlyphs">A08 - A08</text>
<text x="920.6" y="276.2" font-size="9.99" fill="#e6e6e6" text-anchor="end">3</text>
<path d="M666.5,93.5 H922.5" stroke="#5c5c5c" stroke-width="1" stroke-dasharray="2,2.6"/>
<path d="M666.5,111.5 H922.5" stroke="#5c5c5c" stroke-width="1" stroke-dasharray="2,2.6"/>
<path d="M666.5,129.5 H922.5" stroke="#5c5c5c" stroke-width="1" stroke-dasharray="2,2.6"/>
<path d="M666.5,148.5 H922.5" stroke="#5c5c5c" stroke-width="1" stroke-dasharray="2,2.6"/>
<path d="M666.5,166.5 H922.5" stroke="#5c5c5c" stroke-width="1" stroke-dasharray="2,2.6"/>
<path d="M666.5,184.5 H922.5" stroke="#5c5c5c" stroke-width="1" stroke-dasharray="2,2.6"/>
<path d="M666.5,203.5 H922.5" stroke="#5c5c5c" stroke-width="1" stroke-dasharray="2,2.6"/>
<path d="M666.5,221.5 H922.5" stroke="#5c5c5c" stroke-width="1" stroke-dasharray="2,2.6"/>
<path d="M666.5,239.5 H922.5" stroke="#5c5c5c" stroke-width="1" stroke-dasharray="2,2.6"/>
<path d="M751.9,75.5 V258.5" stroke="#5c5c5c" stroke-width="1" stroke-dasharray="2,2.6"/>
<path d="M837.7,75.5 V258.5" stroke="#5c5c5c" stroke-width="1" stroke-dasharray="2,2.6"/>
<rect x="666.5" y="75.5" width="256.0" height="183.0" fill="none" stroke="#989898" stroke-width="1"/>
<polyline points="665.3,181.0 669.6,181.0 673.8,181.0 678.4,180.3 682.7,180.3 686.9,180.0 691.5,168.6 695.1,150.9 699.7,146.0 703.9,146.7 708.5,148.5 712.8,150.2 717.4,151.6 721.6,152.7 726.2,153.8 730.5,154.5 734.0,153.8 737.6,143.1 742.5,137.1 746.8,139.2 751.0,141.7 755.3,144.2 759.9,146.3 764.1,148.5 768.8,150.2 773.0,152.0 777.2,153.8 781.5,155.2 785.8,157.0 790.0,158.0 794.2,158.7 798.5,159.4 802.8,160.9 807.0,158.7" fill="none" stroke="#10e646" stroke-width="0.95"/>
<circle cx="665.3" cy="181.0" r="1.7" fill="#10e646"/>
<circle cx="669.6" cy="181.0" r="1.7" fill="#10e646"/>
<circle cx="673.8" cy="181.0" r="1.7" fill="#10e646"/>
<circle cx="678.4" cy="180.3" r="1.7" fill="#10e646"/>
<circle cx="682.7" cy="180.3" r="1.7" fill="#10e646"/>
<circle cx="686.9" cy="180.0" r="1.7" fill="#10e646"/>
<circle cx="691.5" cy="168.6" r="1.7" fill="#10e646"/>
<circle cx="695.1" cy="150.9" r="1.7" fill="#10e646"/>
<circle cx="699.7" cy="146.0" r="1.7" fill="#10e646"/>
<circle cx="703.9" cy="146.7" r="1.7" fill="#10e646"/>
<circle cx="708.5" cy="148.5" r="1.7" fill="#10e646"/>
<circle cx="712.8" cy="150.2" r="1.7" fill="#10e646"/>
<circle cx="717.4" cy="151.6" r="1.7" fill="#10e646"/>
<circle cx="721.6" cy="152.7" r="1.7" fill="#10e646"/>
<circle cx="726.2" cy="153.8" r="1.7" fill="#10e646"/>
<circle cx="730.5" cy="154.5" r="1.7" fill="#10e646"/>
<circle cx="734.0" cy="153.8" r="1.7" fill="#10e646"/>
<circle cx="737.6" cy="143.1" r="1.7" fill="#10e646"/>
<circle cx="742.5" cy="137.1" r="1.7" fill="#10e646"/>
<circle cx="746.8" cy="139.2" r="1.7" fill="#10e646"/>
<circle cx="751.0" cy="141.7" r="1.7" fill="#10e646"/>
<circle cx="755.3" cy="144.2" r="1.7" fill="#10e646"/>
<circle cx="759.9" cy="146.3" r="1.7" fill="#10e646"/>
<circle cx="764.1" cy="148.5" r="1.7" fill="#10e646"/>
<circle cx="768.8" cy="150.2" r="1.7" fill="#10e646"/>
<circle cx="773.0" cy="152.0" r="1.7" fill="#10e646"/>
<circle cx="777.2" cy="153.8" r="1.7" fill="#10e646"/>
<circle cx="781.5" cy="155.2" r="1.7" fill="#10e646"/>
<circle cx="785.8" cy="157.0" r="1.7" fill="#10e646"/>
<circle cx="790.0" cy="158.0" r="1.7" fill="#10e646"/>
<circle cx="794.2" cy="158.7" r="1.7" fill="#10e646"/>
<circle cx="798.5" cy="159.4" r="1.7" fill="#10e646"/>
<circle cx="802.8" cy="160.9" r="1.7" fill="#10e646"/>
<circle cx="807.0" cy="158.7" r="1.7" fill="#10e646"/>
<polyline points="807.0,156.2 809.1,115.5 811.2,74.8" fill="none" stroke="#d80c14" stroke-width="1.1" stroke-dasharray="8,3.4"/>
<polyline points="814.8,74.8 819.4,141.4 823.6,175.7 827.9,191.0" fill="none" stroke="#10e646" stroke-width="0.95"/>
<circle cx="814.8" cy="74.8" r="1.7" fill="#10e646"/>
<circle cx="819.4" cy="141.4" r="1.7" fill="#10e646"/>
<circle cx="823.6" cy="175.7" r="1.7" fill="#10e646"/>
<circle cx="827.9" cy="191.0" r="1.7" fill="#10e646"/>
<polyline points="832.5,195.2 836.8,198.8 841.0,200.5 845.2,200.9 849.5,200.9 853.8,200.5 858.0,200.9 862.2,200.2 866.5,200.9 870.8,201.2 875.0,201.2 879.2,201.2 883.5,201.9 887.8,202.6 892.0,203.0 896.2,203.7 900.5,204.4 904.8,204.4 909.0,204.8 913.2,205.1 918.6,205.8" fill="none" stroke="#7d7dd0" stroke-width="0.9" stroke-dasharray="1.5,1.5"/>
<circle cx="832.5" cy="195.2" r="1.35" fill="#7d7dd0"/>
<circle cx="836.8" cy="198.8" r="1.35" fill="#7d7dd0"/>
<circle cx="841.0" cy="200.5" r="1.35" fill="#7d7dd0"/>
<circle cx="845.2" cy="200.9" r="1.35" fill="#7d7dd0"/>
<circle cx="849.5" cy="200.9" r="1.35" fill="#7d7dd0"/>
<circle cx="853.8" cy="200.5" r="1.35" fill="#7d7dd0"/>
<circle cx="858.0" cy="200.9" r="1.35" fill="#7d7dd0"/>
<circle cx="862.2" cy="200.2" r="1.35" fill="#7d7dd0"/>
<circle cx="866.5" cy="200.9" r="1.35" fill="#7d7dd0"/>
<circle cx="870.8" cy="201.2" r="1.35" fill="#7d7dd0"/>
<circle cx="875.0" cy="201.2" r="1.35" fill="#7d7dd0"/>
<circle cx="879.2" cy="201.2" r="1.35" fill="#7d7dd0"/>
<circle cx="883.5" cy="201.9" r="1.35" fill="#7d7dd0"/>
<circle cx="887.8" cy="202.6" r="1.35" fill="#7d7dd0"/>
<circle cx="892.0" cy="203.0" r="1.35" fill="#7d7dd0"/>
<circle cx="896.2" cy="203.7" r="1.35" fill="#7d7dd0"/>
<circle cx="900.5" cy="204.4" r="1.35" fill="#7d7dd0"/>
<circle cx="904.8" cy="204.4" r="1.35" fill="#7d7dd0"/>
<circle cx="909.0" cy="204.8" r="1.35" fill="#7d7dd0"/>
<circle cx="913.2" cy="205.1" r="1.35" fill="#7d7dd0"/>
<circle cx="918.6" cy="205.8" r="1.35" fill="#7d7dd0"/>
<path d="M809.8,75.5 l1.6,-2 l1.6,2 l-1.6,2 z M813.7,75.5 l1.6,-2 l1.6,2 l-1.6,2 z" fill="none" stroke="#e01010" stroke-width="0.9"/>
<path d="M666.5,115.6 H923.0" stroke="#f00000" stroke-width="1.4"/>
<path d="M666.5,192.8 H923.0" stroke="#8080d4" stroke-width="1.3"/>
<text x="627.6" y="81.8" font-size="10.66" fill="#fff" textLength="23.6" lengthAdjust="spacingAndGlyphs">38.00</text>
<text x="627.6" y="118.4" font-size="10.66" fill="#fff" textLength="23.6" lengthAdjust="spacingAndGlyphs">34.40</text>
<text x="627.6" y="155.0" font-size="10.66" fill="#fff" textLength="23.6" lengthAdjust="spacingAndGlyphs">30.80</text>
<text x="627.6" y="191.6" font-size="10.66" fill="#fff" textLength="23.6" lengthAdjust="spacingAndGlyphs">27.20</text>
<text x="627.6" y="228.2" font-size="10.66" fill="#fff" textLength="23.6" lengthAdjust="spacingAndGlyphs">23.60</text>
<text x="627.6" y="259.4" font-size="10.66" fill="#fff" textLength="23.6" lengthAdjust="spacingAndGlyphs">20.00</text>
<text x="666.9" y="272.6" font-size="10.43" fill="#fff" textLength="37.6" lengthAdjust="spacingAndGlyphs">15:45:58</text>
<text x="751.6" y="273.7" font-size="11.32" fill="#fff" textLength="41.6" lengthAdjust="spacingAndGlyphs">15:47:57</text>
<text x="837.0" y="273.7" font-size="11.32" fill="#fff" textLength="41.6" lengthAdjust="spacingAndGlyphs">15:50:44</text>
<text x="627.4" y="128.0" font-size="11.99" fill="#e00000" textLength="27" lengthAdjust="spacingAndGlyphs">34.00</text>
<text x="627.4" y="205.0" font-size="11.99" fill="#7d7dd0" textLength="27" lengthAdjust="spacingAndGlyphs">26.40</text>
<rect x="864" y="79" width="55.8" height="28.2" fill="#5b5b5b"/>
<text x="891.6" y="100.7" font-size="21.2" fill="#fff" text-anchor="middle" textLength="52.6" lengthAdjust="spacingAndGlyphs">25.06</text>
<text x="7.6" y="295.0" font-size="10.77" fill="#fff" textLength="60.4" lengthAdjust="spacingAndGlyphs">222333 - Data</text>
<text x="302.3" y="295.0" font-size="10.77" fill="#fff" text-anchor="end" textLength="43" lengthAdjust="spacingAndGlyphs">A09 - A09</text>
<text x="300.6" y="504.2" font-size="9.99" fill="#e6e6e6" text-anchor="end">4</text>
<rect x="7.4" y="303.2" width="13.2" height="13" fill="#ff0000"/>
<text x="23.2" y="313.6" font-size="10.66" fill="#fff" textLength="45.6" lengthAdjust="spacingAndGlyphs">(H) : 33.00</text>
<rect x="7.4" y="318.4" width="13.2" height="13" fill="#1080d0"/>
<text x="23.2" y="328.8" font-size="10.66" fill="#fff" textLength="45.8" lengthAdjust="spacingAndGlyphs">(L ) : 25.00</text>
<rect x="140" y="303.4" width="30" height="181.8" fill="url(#gcol)"/>
<rect x="140" y="331.9" width="30" height="1.4" fill="#000"/>
<rect x="140" y="362.9" width="30" height="1.4" fill="#000"/>
<rect x="140" y="393.6" width="30" height="1.4" fill="#000"/>
<rect x="140" y="423.7" width="30" height="1.4" fill="#000"/>
<rect x="140" y="454.3" width="30" height="1.4" fill="#000"/>
<text x="132.8" y="310.6" font-size="10.66" fill="#fff" text-anchor="end" textLength="23.8" lengthAdjust="spacingAndGlyphs">38.00</text>
<text x="132.8" y="340.9" font-size="10.66" fill="#fff" text-anchor="end" textLength="23.8" lengthAdjust="spacingAndGlyphs">35.00</text>
<text x="132.8" y="371.2" font-size="10.66" fill="#fff" text-anchor="end" textLength="23.8" lengthAdjust="spacingAndGlyphs">32.00</text>
<text x="132.8" y="401.5" font-size="10.66" fill="#fff" text-anchor="end" textLength="23.8" lengthAdjust="spacingAndGlyphs">29.00</text>
<text x="132.8" y="431.8" font-size="10.66" fill="#fff" text-anchor="end" textLength="23.8" lengthAdjust="spacingAndGlyphs">26.00</text>
<text x="132.8" y="462.1" font-size="10.66" fill="#fff" text-anchor="end" textLength="23.8" lengthAdjust="spacingAndGlyphs">23.00</text>
<text x="132.8" y="488.8" font-size="10.66" fill="#fff" text-anchor="end" textLength="23.8" lengthAdjust="spacingAndGlyphs">20.00</text>
<rect x="140" y="352.4" width="30" height="1.2" fill="#f00000"/><path d="M170,353 l2,-2.4 h15.4 v5 h-15.4 z" fill="#f00000"/>
<rect x="140" y="434.3" width="30" height="1.3" fill="#1078d0"/><path d="M170,435.4 l2,-1.4 h15.2 v3.4 h-15.2 z" fill="#1078d0"/>
<path d="M170,434.6 l2,-2.2 h29.8 v4.2 h-29.8 z" fill="#32cd32"/>
<text x="154.2" y="500.3" font-size="10.77" fill="#fff" text-anchor="middle" textLength="90.6" lengthAdjust="spacingAndGlyphs">22/03/2013 15:53:10</text>
<rect x="244" y="307" width="55.8" height="28.2" fill="#5b5b5b"/>
<text x="271.6" y="328.7" font-size="21.2" fill="#fff" text-anchor="middle" textLength="52.6" lengthAdjust="spacingAndGlyphs">25.06</text>
<text x="317.6" y="295.0" font-size="10.77" fill="#fff" textLength="60.4" lengthAdjust="spacingAndGlyphs">222333 - Data</text>
<text x="612.3" y="295.0" font-size="10.77" fill="#fff" text-anchor="end" textLength="43" lengthAdjust="spacingAndGlyphs">A10 - A10</text>
<text x="610.6" y="504.2" font-size="9.99" fill="#e6e6e6" text-anchor="end">5</text>
<path d="M356.5,321.5 H612.5" stroke="#5c5c5c" stroke-width="1" stroke-dasharray="2,2.6"/>
<path d="M356.5,339.5 H612.5" stroke="#5c5c5c" stroke-width="1" stroke-dasharray="2,2.6"/>
<path d="M356.5,357.5 H612.5" stroke="#5c5c5c" stroke-width="1" stroke-dasharray="2,2.6"/>
<path d="M356.5,376.5 H612.5" stroke="#5c5c5c" stroke-width="1" stroke-dasharray="2,2.6"/>
<path d="M356.5,394.5 H612.5" stroke="#5c5c5c" stroke-width="1" stroke-dasharray="2,2.6"/>
<path d="M356.5,412.5 H612.5" stroke="#5c5c5c" stroke-width="1" stroke-dasharray="2,2.6"/>
<path d="M356.5,431.5 H612.5" stroke="#5c5c5c" stroke-width="1" stroke-dasharray="2,2.6"/>
<path d="M356.5,449.5 H612.5" stroke="#5c5c5c" stroke-width="1" stroke-dasharray="2,2.6"/>
<path d="M356.5,467.5 H612.5" stroke="#5c5c5c" stroke-width="1" stroke-dasharray="2,2.6"/>
<path d="M441.9,303.5 V486.5" stroke="#5c5c5c" stroke-width="1" stroke-dasharray="2,2.6"/>
<path d="M527.7,303.5 V486.5" stroke="#5c5c5c" stroke-width="1" stroke-dasharray="2,2.6"/>
<rect x="356.5" y="303.5" width="256.0" height="183.0" fill="none" stroke="#808080" stroke-width="1"/>
<path d="M356.7,486.5 L356.7,416.7 L363.3,416.0 L370.0,415.0 L376.7,415.3 L383.3,414.3 L389.3,413.7 L392.0,416.7 L394.7,424.0 L397.3,429.0 L400.0,430.7 L410.0,430.7 L423.3,431.0 L433.3,432.0 L443.3,431.0 L456.7,430.7 L470.0,431.0 L483.3,430.7 L496.0,430.7 L496.7,423.3 L498.0,406.7 L499.3,390.0 L500.7,320.0 L502.0,304.0 L504.0,304.0 L505.3,320.0 L506.7,346.7 L508.0,376.7 L510.0,411.7 L512.0,404.0 L514.7,392.7 L518.0,384.0 L521.3,378.7 L523.3,376.0 L526.0,380.0 L528.7,387.3 L531.3,395.3 L532.7,398.0 L540.0,400.7 L550.0,404.7 L560.0,408.0 L570.0,410.0 L583.3,412.3 L596.7,413.0 L608.3,413.7 L608.3,486.5 Z" fill="#32cd32"/>
<path d="M496.3,486.5 L496.3,426.7 L498.7,390.0 L500.7,303.5 L505.0,303.5 L505.0,486.5 Z" fill="#ff0a0a"/>
<path d="M356.5,341 H612.5" stroke="#f00000" stroke-width="1.3"/>
<path d="M356.5,437.2 H612.5" stroke="#3a62d8" stroke-width="1.3"/>
<text x="317.6" y="309.8" font-size="10.66" fill="#fff" textLength="23.6" lengthAdjust="spacingAndGlyphs">39.00</text>
<text x="317.6" y="346.4" font-size="10.66" fill="#fff" textLength="23.6" lengthAdjust="spacingAndGlyphs">35.20</text>
<text x="317.6" y="383.0" font-size="10.66" fill="#fff" textLength="23.6" lengthAdjust="spacingAndGlyphs">31.40</text>
<text x="317.6" y="419.6" font-size="10.66" fill="#fff" textLength="23.6" lengthAdjust="spacingAndGlyphs">27.60</text>
<text x="317.6" y="456.2" font-size="10.66" fill="#fff" textLength="23.6" lengthAdjust="spacingAndGlyphs">23.80</text>
<text x="317.6" y="487.4" font-size="10.66" fill="#fff" textLength="23.6" lengthAdjust="spacingAndGlyphs">20.00</text>
<text x="356.9" y="500.6" font-size="10.43" fill="#fff" textLength="37.6" lengthAdjust="spacingAndGlyphs">15:45:58</text>
<text x="441.6" y="501.7" font-size="11.32" fill="#fff" textLength="41.6" lengthAdjust="spacingAndGlyphs">15:47:57</text>
<text x="527.0" y="501.7" font-size="11.32" fill="#fff" textLength="41.6" lengthAdjust="spacingAndGlyphs">15:50:44</text>
<text x="317.4" y="353.4" font-size="11.99" fill="#e00000" textLength="27" lengthAdjust="spacingAndGlyphs">35.00</text>
<text x="317.4" y="449.2" font-size="11.99" fill="#3060d8" textLength="27" lengthAdjust="spacingAndGlyphs">25.00</text>
<rect x="554" y="307" width="55.8" height="28.2" fill="#5b5b5b"/>
<text x="581.6" y="328.7" font-size="21.2" fill="#fff" text-anchor="middle" textLength="52.6" lengthAdjust="spacingAndGlyphs">27.43</text>
<text x="343.4" y="392.6" font-size="25" fill="#ffffff" textLength="272.6" lengthAdjust="spacingAndGlyphs" opacity="0.5">easemind.en.alibaba.com</text>
<text x="627.6" y="295.0" font-size="10.77" fill="#fff" textLength="60.4" lengthAdjust="spacingAndGlyphs">222333 - Data</text>
<text x="922.3" y="295.0" font-size="10.77" fill="#fff" text-anchor="end" textLength="43" lengthAdjust="spacingAndGlyphs">A11 - A11</text>
<text x="920.6" y="504.2" font-size="9.99" fill="#e6e6e6" text-anchor="end">6</text>
<rect x="627.4" y="303.2" width="13.2" height="13" fill="#ff0000"/>
<text x="643.2" y="313.6" font-size="10.66" fill="#fff" textLength="45.6" lengthAdjust="spacingAndGlyphs">(H) : 35.00</text>
<rect x="627.4" y="318.4" width="13.2" height="13" fill="#3070e0"/>
<text x="643.2" y="328.8" font-size="10.66" fill="#fff" textLength="45.8" lengthAdjust="spacingAndGlyphs">(L ) : 25.00</text>
<path d="M768.7,478 V308.6 A6.4,6.4 0 0 1 781.5,308.6 V478 Z" fill="#fff"/>
<circle cx="774.9" cy="477" r="12.6" fill="#32cd32" stroke="#f4f4f4" stroke-width="0.8"/>
<rect x="769.7" y="414" width="10.8" height="56" fill="#32cd32"/>
<path d="M783,321.4 H796.6" stroke="#f0f0f0" stroke-width="1.2"/>
<text x="797.8" y="325.0" font-size="10.66" fill="#fff" textLength="24.2" lengthAdjust="spacingAndGlyphs">40.00</text>
<path d="M783,328.0 H792.2" stroke="#8c8c8c" stroke-width="1.1"/>
<path d="M783,334.6 H792.2" stroke="#8c8c8c" stroke-width="1.1"/>
<path d="M783,341.2 H792.2" stroke="#8c8c8c" stroke-width="1.1"/>
<path d="M783,347.8 H792.2" stroke="#8c8c8c" stroke-width="1.1"/>
<path d="M783,354.4 H796.6" stroke="#f0f0f0" stroke-width="1.2"/>
<text x="797.8" y="358.1" font-size="10.66" fill="#fff" textLength="24.2" lengthAdjust="spacingAndGlyphs">35.00</text>
<path d="M783,361.1 H792.2" stroke="#f0f0f0" stroke-width="1.1"/>
<path d="M783,367.7 H792.2" stroke="#f0f0f0" stroke-width="1.1"/>
<path d="M783,374.3 H792.2" stroke="#f0f0f0" stroke-width="1.1"/>
<path d="M783,380.9 H792.2" stroke="#f0f0f0" stroke-width="1.1"/>
<path d="M783,387.5 H796.6" stroke="#f0f0f0" stroke-width="1.2"/>
<text x="797.8" y="391.1" font-size="10.66" fill="#fff" textLength="24.2" lengthAdjust="spacingAndGlyphs">30.00</text>
<path d="M783,394.1 H792.2" stroke="#f0f0f0" stroke-width="1.1"/>
<path d="M783,400.7 H792.2" stroke="#f0f0f0" stroke-width="1.1"/>
<path d="M783,407.3 H792.2" stroke="#f0f0f0" stroke-width="1.1"/>
<path d="M783,413.9 H792.2" stroke="#8c8c8c" stroke-width="1.1"/>
<path d="M783,420.5 H796.6" stroke="#b4b4b4" stroke-width="1.2"/>
<text x="797.8" y="424.1" font-size="10.66" fill="#fff" textLength="24.2" lengthAdjust="spacingAndGlyphs">25.00</text>
<path d="M783,427.2 H792.2" stroke="#8c8c8c" stroke-width="1.1"/>
<path d="M783,433.8 H792.2" stroke="#8c8c8c" stroke-width="1.1"/>
<path d="M783,440.4 H792.2" stroke="#8c8c8c" stroke-width="1.1"/>
<path d="M783,447.0 H792.2" stroke="#8c8c8c" stroke-width="1.1"/>
<path d="M783,453.6 H796.6" stroke="#b4b4b4" stroke-width="1.2"/>
<text x="797.8" y="457.2" font-size="10.66" fill="#fff" textLength="24.2" lengthAdjust="spacingAndGlyphs">20.00</text>
<path d="M723.2,406.8 H753.4 L760.2,414.1 L753.4,421.4 H723.2 Q721.4,421.4 721.4,419.6 V408.6 Q721.4,406.8 723.2,406.8 Z" fill="#16167c" stroke="#b8b8c8" stroke-width="0.6"/>
<rect x="723.2" y="408.6" width="29.6" height="11" fill="#dcdcdc"/>
<text x="738.0" y="418.0" font-size="10.43" fill="#202020" text-anchor="middle" textLength="23.4" lengthAdjust="spacingAndGlyphs">25.93</text>
<text x="774.4" y="500.1" font-size="10.77" fill="#fff" text-anchor="middle" textLength="90.6" lengthAdjust="spacingAndGlyphs">22/03/2013 15:53:10</text>
<rect x="864" y="307" width="55.8" height="28.2" fill="#5b5b5b"/>
<text x="891.6" y="328.7" font-size="21.2" fill="#fff" text-anchor="middle" textLength="52.6" lengthAdjust="spacingAndGlyphs">25.93</text>
<text x="7.6" y="523.0" font-size="10.77" fill="#fff" textLength="60.4" lengthAdjust="spacingAndGlyphs">222333 - Data</text>
<text x="302.3" y="523.0" font-size="10.77" fill="#fff" text-anchor="end" textLength="43" lengthAdjust="spacingAndGlyphs">A12 - A12</text>
<text x="300.6" y="732.2" font-size="9.99" fill="#e6e6e6" text-anchor="end">7</text>
<rect x="7.4" y="531.2" width="13.2" height="13" fill="#ff0000"/>
<text x="23.2" y="541.6" font-size="10.66" fill="#fff" textLength="45.6" lengthAdjust="spacingAndGlyphs">(H) : 35.00</text>
<rect x="7.4" y="546.4000000000001" width="13.2" height="13" fill="#3a72e8"/>
<text x="23.2" y="556.8" font-size="10.66" fill="#fff" textLength="45.8" lengthAdjust="spacingAndGlyphs">(L ) : 25.00</text>
<path d="M98.7,690.8 A80.8,80.8 0 1 1 209.9,690.8" fill="none" stroke="#666" stroke-width="10.8" stroke-linecap="round"/>
<g filter="url(#soft)"><path d="M98.7,690.8 A80.8,80.8 0 1 1 209.9,690.8" fill="none" stroke="#9c9c9c" stroke-width="7.4" stroke-linecap="round"/><path d="M98.7,690.8 A80.8,80.8 0 1 1 209.9,690.8" fill="none" stroke="#cecece" stroke-width="4" stroke-linecap="round"/></g>
<g filter="url(#soft)"><path d="M144.5,552.0 A80.8,80.8 0 0 1 164.1,552.0" fill="none" stroke="#e2e2e2" stroke-width="5.4"/></g>
<path d="M101.7,687.6 A76.4,76.4 0 1 1 206.9,687.6 Z" fill="#fff"/>
<rect x="100.4" y="686.6" width="108" height="6.6" fill="#4a4a4a"/>
<path d="M102.62,685.72 A74.4,74.4 0 0 1 89.87,595.00" fill="none" stroke="#3a72e8" stroke-width="3.6"/>
<path d="M89.87,595.00 A74.4,74.4 0 0 1 228.70,632.20" fill="none" stroke="#32cd32" stroke-width="3.6"/>
<path d="M228.70,632.20 A74.4,74.4 0 0 1 205.98,685.72" fill="none" stroke="#f01010" stroke-width="3.6"/>
<path d="M103.81,682.69 L108.06,678.44" stroke="#7c7c7c" stroke-width="1.1"/>
<path d="M97.18,673.70 L99.77,671.82" stroke="#8e8e8e" stroke-width="0.9"/>
<path d="M91.39,664.25 L94.25,662.80" stroke="#8e8e8e" stroke-width="0.9"/>
<path d="M87.16,654.02 L90.20,653.03" stroke="#8e8e8e" stroke-width="0.9"/>
<path d="M84.57,643.24 L87.73,642.74" stroke="#8e8e8e" stroke-width="0.9"/>
<path d="M82.90,632.20 L88.90,632.20" stroke="#7c7c7c" stroke-width="1.1"/>
<path d="M84.57,621.16 L87.73,621.66" stroke="#8e8e8e" stroke-width="0.9"/>
<path d="M87.16,610.38 L90.20,611.37" stroke="#8e8e8e" stroke-width="0.9"/>
<path d="M91.39,600.15 L94.25,601.60" stroke="#8e8e8e" stroke-width="0.9"/>
<path d="M97.18,590.70 L99.77,592.58" stroke="#8e8e8e" stroke-width="0.9"/>
<path d="M103.81,581.71 L108.06,585.96" stroke="#7c7c7c" stroke-width="1.1"/>
<path d="M112.80,575.08 L114.68,577.67" stroke="#8e8e8e" stroke-width="0.9"/>
<path d="M122.25,569.29 L123.70,572.15" stroke="#8e8e8e" stroke-width="0.9"/>
<path d="M132.48,565.06 L133.47,568.10" stroke="#8e8e8e" stroke-width="0.9"/>
<path d="M143.26,562.47 L143.76,565.63" stroke="#8e8e8e" stroke-width="0.9"/>
<path d="M154.30,560.80 L154.30,566.80" stroke="#7c7c7c" stroke-width="1.1"/>
<path d="M165.34,562.47 L164.84,565.63" stroke="#8e8e8e" stroke-width="0.9"/>
<path d="M176.12,565.06 L175.13,568.10" stroke="#8e8e8e" stroke-width="0.9"/>
<path d="M186.35,569.29 L184.90,572.15" stroke="#8e8e8e" stroke-width="0.9"/>
<path d="M195.80,575.08 L193.92,577.67" stroke="#8e8e8e" stroke-width="0.9"/>
<path d="M204.79,581.71 L200.54,585.96" stroke="#7c7c7c" stroke-width="1.1"/>
<path d="M211.42,590.70 L208.83,592.58" stroke="#8e8e8e" stroke-width="0.9"/>
<path d="M217.21,600.15 L214.35,601.60" stroke="#8e8e8e" stroke-width="0.9"/>
<path d="M221.44,610.38 L218.40,611.37" stroke="#8e8e8e" stroke-width="0.9"/>
<path d="M224.03,621.16 L220.87,621.66" stroke="#8e8e8e" stroke-width="0.9"/>
<path d="M225.70,632.20 L219.70,632.20" stroke="#7c7c7c" stroke-width="1.1"/>
<path d="M224.03,643.24 L220.87,642.74" stroke="#8e8e8e" stroke-width="0.9"/>
<path d="M221.44,654.02 L218.40,653.03" stroke="#8e8e8e" stroke-width="0.9"/>
<path d="M217.21,664.25 L214.35,662.80" stroke="#8e8e8e" stroke-width="0.9"/>
<path d="M211.42,673.70 L208.83,671.82" stroke="#8e8e8e" stroke-width="0.9"/>
<path d="M204.79,682.69 L200.54,678.44" stroke="#7c7c7c" stroke-width="1.1"/>
<text x="120.0" y="683.2" font-size="10.66" fill="#5c564e" text-anchor="middle" textLength="24" lengthAdjust="spacingAndGlyphs">20.00</text>
<text x="101.7" y="637.2" font-size="10.66" fill="#5c564e" text-anchor="middle" textLength="24" lengthAdjust="spacingAndGlyphs">23.00</text>
<text x="116.9" y="594.8" font-size="10.66" fill="#5c564e" text-anchor="middle" textLength="24" lengthAdjust="spacingAndGlyphs">26.00</text>
<text x="155.7" y="577.5" font-size="10.66" fill="#5c564e" text-anchor="middle" textLength="24" lengthAdjust="spacingAndGlyphs">29.00</text>
<text x="189.0" y="592.5" font-size="10.66" fill="#5c564e" text-anchor="middle" textLength="24" lengthAdjust="spacingAndGlyphs">32.00</text>
<text x="207.5" y="637.2" font-size="10.66" fill="#5c564e" text-anchor="middle" textLength="24" lengthAdjust="spacingAndGlyphs">35.00</text>
<text x="189.0" y="683.2" font-size="10.66" fill="#5c564e" text-anchor="middle" textLength="24" lengthAdjust="spacingAndGlyphs">38.00</text>
<path d="M142.3,557 L148.7,630.6 L156.6,645.6 L159.6,631.4 L155.4,615 Z" fill="#333"/>
<circle cx="154.2" cy="632.6" r="0.9" fill="#bdbdbd"/>
<text x="154.2" y="727.6" font-size="10.77" fill="#fff" text-anchor="middle" textLength="90.6" lengthAdjust="spacingAndGlyphs">22/03/2013 15:53:10</text>
<rect x="244" y="535" width="55.8" height="28.2" fill="#5b5b5b"/>
<text x="271.6" y="556.7" font-size="21.2" fill="#fff" text-anchor="middle" textLength="52.6" lengthAdjust="spacingAndGlyphs">28.37</text>
<text x="317.6" y="523.0" font-size="10.77" fill="#fff" textLength="60.4" lengthAdjust="spacingAndGlyphs">222333 - Data</text>
<text x="612.3" y="523.0" font-size="10.77" fill="#fff" text-anchor="end" textLength="43" lengthAdjust="spacingAndGlyphs">A13 - A13</text>
<text x="610.6" y="732.2" font-size="9.99" fill="#e6e6e6" text-anchor="end">8</text>
<rect x="317.4" y="531.2" width="13.2" height="13" fill="#ff0000"/>
<text x="333.2" y="541.6" font-size="10.66" fill="#fff" textLength="45.6" lengthAdjust="spacingAndGlyphs">(H) : 35.00</text>
<rect x="317.4" y="546.4000000000001" width="13.2" height="13" fill="#3a72e8"/>
<text x="333.2" y="556.8" font-size="10.66" fill="#fff" textLength="45.8" lengthAdjust="spacingAndGlyphs">(L ) : 25.00</text>
<path d="M317.60,706.40 A146.4,146.4 0 0 1 360.48,602.88 L375.89,618.29 A124.6,124.6 0 0 0 339.40,706.40 Z" fill="#3a72e8"/>
<path d="M360.48,602.88 A146.4,146.4 0 0 1 567.52,602.88 L552.11,618.29 A124.6,124.6 0 0 0 375.89,618.29 Z" fill="#32cd32"/>
<path d="M567.52,602.88 A146.4,146.4 0 0 1 610.40,706.40 L588.60,706.40 A124.6,124.6 0 0 0 552.11,618.29 Z" fill="#ff0000"/>
<path d="M317.60,706.40 A146.4,146.4 0 0 1 610.40,706.40" fill="none" stroke="#fff" stroke-width="1.9"/>
<path d="M317.60,706.40 L339.10,706.40" stroke="#fff" stroke-width="1.7"/>
<path d="M319.82,680.98 L329.18,682.63" stroke="#fff" stroke-width="1.4"/>
<path d="M326.43,656.33 L335.36,659.58" stroke="#fff" stroke-width="1.4"/>
<path d="M337.21,633.20 L355.83,643.95" stroke="#fff" stroke-width="1.7"/>
<path d="M351.85,612.30 L359.13,618.40" stroke="#fff" stroke-width="1.4"/>
<path d="M369.90,594.25 L376.00,601.53" stroke="#fff" stroke-width="1.4"/>
<path d="M390.80,579.61 L401.55,598.23" stroke="#fff" stroke-width="1.7"/>
<path d="M413.93,568.83 L417.18,577.76" stroke="#fff" stroke-width="1.4"/>
<path d="M438.58,562.22 L440.23,571.58" stroke="#fff" stroke-width="1.4"/>
<path d="M464.00,560.00 L464.00,581.50" stroke="#fff" stroke-width="1.7"/>
<path d="M489.42,562.22 L487.77,571.58" stroke="#fff" stroke-width="1.4"/>
<path d="M514.07,568.83 L510.82,577.76" stroke="#fff" stroke-width="1.4"/>
<path d="M537.20,579.61 L526.45,598.23" stroke="#fff" stroke-width="1.7"/>
<path d="M558.10,594.25 L552.00,601.53" stroke="#fff" stroke-width="1.4"/>
<path d="M576.15,612.30 L568.87,618.40" stroke="#fff" stroke-width="1.4"/>
<path d="M590.79,633.20 L572.17,643.95" stroke="#fff" stroke-width="1.7"/>
<path d="M601.57,656.33 L592.64,659.58" stroke="#fff" stroke-width="1.4"/>
<path d="M608.18,680.98 L598.82,682.63" stroke="#fff" stroke-width="1.4"/>
<path d="M610.40,706.40 L588.90,706.40" stroke="#fff" stroke-width="1.7"/>
<text x="350.7" y="704.2" font-size="10.66" fill="#fff" text-anchor="middle" textLength="23.8" lengthAdjust="spacingAndGlyphs">20.00</text>
<text x="366.7" y="653.8" font-size="10.66" fill="#fff" text-anchor="middle" textLength="23.8" lengthAdjust="spacingAndGlyphs">23.33</text>
<text x="412.3" y="608.2" font-size="10.66" fill="#fff" text-anchor="middle" textLength="23.8" lengthAdjust="spacingAndGlyphs">26.66</text>
<text x="463.3" y="591.5" font-size="10.66" fill="#fff" text-anchor="middle" textLength="23.8" lengthAdjust="spacingAndGlyphs">30.00</text>
<text x="514.3" y="608.2" font-size="10.66" fill="#fff" text-anchor="middle" textLength="23.8" lengthAdjust="spacingAndGlyphs">33.33</text>
<text x="561.0" y="653.8" font-size="10.66" fill="#fff" text-anchor="middle" textLength="23.8" lengthAdjust="spacingAndGlyphs">36.66</text>
<text x="578.3" y="704.2" font-size="10.66" fill="#fff" text-anchor="middle" textLength="23.8" lengthAdjust="spacingAndGlyphs">40.00</text>
<path d="M384,606.4 L460.4,707.4 L463.6,709 L466.6,704.6 L466,702.4 Z" fill="#32cd32"/>
<path d="M384,606.4 L460.4,707.4" stroke="#e8ffe8" stroke-width="0.9" fill="none"/>
<circle cx="464" cy="706.4" r="2.4" fill="#32cd32" stroke="#eaffea" stroke-width="0.9"/>
<text x="464.6" y="724.8" font-size="10.77" fill="#fff" text-anchor="middle" textLength="90.6" lengthAdjust="spacingAndGlyphs">22/03/2013 15:53:10</text>
<rect x="554" y="535" width="55.8" height="28.2" fill="#5b5b5b"/>
<text x="581.6" y="556.7" font-size="21.2" fill="#fff" text-anchor="middle" textLength="52.6" lengthAdjust="spacingAndGlyphs">25.68</text>
<text x="627.6" y="523.0" font-size="10.77" fill="#fff" textLength="60.4" lengthAdjust="spacingAndGlyphs">222333 - Data</text>
<text x="920.6" y="732.2" font-size="9.99" fill="#e6e6e6" text-anchor="end">9</text>
<rect x="627.4" y="531.2" width="13.2" height="13" fill="#ff0000"/>
<text x="643.2" y="541.6" font-size="10.66" fill="#fff" textLength="45.6" lengthAdjust="spacingAndGlyphs">(H) : 118.0</text>
<circle cx="775.2" cy="622.5" r="91" fill="none" stroke="#fff" stroke-width="1.6"/>
<circle cx="775.2" cy="622.5" r="68" fill="none" stroke="#fff" stroke-width="1.6"/>
<circle cx="775.2" cy="622.5" r="45.3" fill="none" stroke="#fff" stroke-width="1.6"/>
<circle cx="775.2" cy="622.5" r="22.3" fill="none" stroke="#fff" stroke-width="1.6"/>
<circle cx="775.2" cy="622.5" r="88.7" fill="none" stroke="#d01818" stroke-width="0.9" stroke-dasharray="10,3.6"/>
<circle cx="775.2" cy="622.5" r="11.2" fill="none" stroke="#2a56c8" stroke-width="0.9"/>
<path d="M684.2,622.5 H866.2 M775.2,531.5 V713.5" stroke="#ececec" stroke-width="1.1" fill="none"/>
<path d="M776.2,622.9 L862.4,626.4 L857.4,647.6 Z" fill="#32cd32"/>
<text x="774.4" y="727.6" font-size="10.77" fill="#fff" text-anchor="middle" textLength="90.6" lengthAdjust="spacingAndGlyphs">22/03/2013 15:53:10</text>
<rect x="864" y="535" width="55.8" height="28.2" fill="#5b5b5b"/>
<text x="891.6" y="556.7" font-size="21.2" fill="#fff" text-anchor="middle" textLength="52.6" lengthAdjust="spacingAndGlyphs">115.0</text>
<rect x="630" y="704.6" width="55.3" height="28" fill="#5b5b5b"/>
<text x="657.6" y="726.2" font-size="21.2" fill="#fff" text-anchor="middle" textLength="52.6" lengthAdjust="spacingAndGlyphs">100.0</text>
<circle cx="16.8" cy="758.4" r="6.4" fill="none" stroke="#3b78e0" stroke-width="1.7"/><path d="M16.8,754.6 V758.8 H20" fill="none" stroke="#3b78e0" stroke-width="1.3"/>
<text x="38.0" y="762.6" font-size="10.32" fill="#e0e0e0" textLength="87.4" lengthAdjust="spacingAndGlyphs">22/03/2013 16:40:40</text>
<circle cx="174.1" cy="758.3" r="7.4" fill="url(#globe)"/><ellipse cx="174.1" cy="754.6" rx="5" ry="2.8" fill="#fff" opacity="0.55"/>
<text x="187.6" y="762.6" font-size="10.32" fill="#e0e0e0" textLength="50.4" lengthAdjust="spacingAndGlyphs">Direct Mode</text>
<text x="501.4" y="760.6" font-size="13.4" fill="#fff" text-anchor="middle" font-weight="bold" textLength="36.6" lengthAdjust="spacingAndGlyphs">Page 1</text>
<path d="M815.6,748.6 Q828,747.6 838,753.6 Q842,756 844,758.6 Q834,751.4 819.6,750.6 Z" fill="#f0f0f0"/><path d="M820,753.6 Q829,752.8 838.4,757.6 Q830,755.2 822.6,755.6 Q825,757 824.4,758.8 Q823,755.4 820,753.6 Z" fill="#e4e4e4"/>
<text x="825.8" y="762.6" font-size="9.4" fill="#f4f4f4" font-weight="bold" textLength="52.6" lengthAdjust="spacingAndGlyphs" style="font-family:'Liberation Serif','DejaVu Serif',serif;font-style:italic">EaseMind</text>
<text x="892.4" y="762.7" font-size="10.1" fill="#d8d8d8" textLength="58.4" lengthAdjust="spacingAndGlyphs">Version : 2.3.6</text>
</svg>
</body>
</html>
